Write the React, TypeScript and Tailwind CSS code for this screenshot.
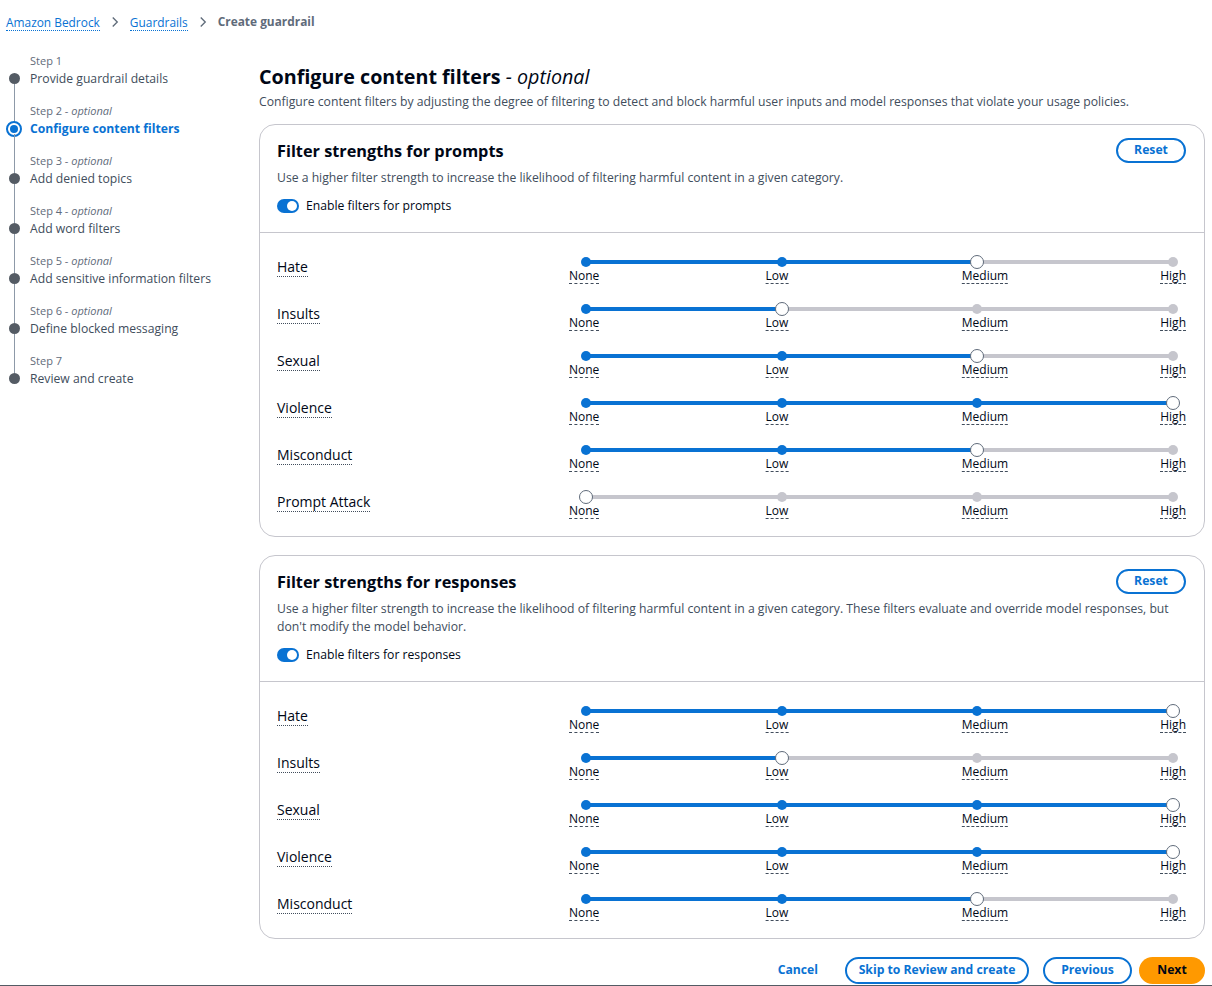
import React from 'react';

const levels = ['None', 'Low', 'Medium', 'High'];

// label placement under the ticks (px from the slider's left edge)
const labelPos = [
  'left-0',
  'left-[208px] -translate-x-1/2',
  'left-[416px] -translate-x-1/2',
  'right-0',
];

const steps = [
  { n: 1, optional: false, title: 'Provide guardrail details' },
  { n: 2, optional: true, title: 'Configure content filters', active: true },
  { n: 3, optional: true, title: 'Add denied topics' },
  { n: 4, optional: true, title: 'Add word filters' },
  { n: 5, optional: true, title: 'Add sensitive information filters' },
  { n: 6, optional: true, title: 'Define blocked messaging' },
  { n: 7, optional: false, title: 'Review and create' },
];

const promptFilters = [
  { name: 'Hate', value: 2 },
  { name: 'Insults', value: 1 },
  { name: 'Sexual', value: 2 },
  { name: 'Violence', value: 3 },
  { name: 'Misconduct', value: 2 },
  { name: 'Prompt Attack', value: 0 },
];

const responseFilters = [
  { name: 'Hate', value: 3 },
  { name: 'Insults', value: 1 },
  { name: 'Sexual', value: 3 },
  { name: 'Violence', value: 3 },
  { name: 'Misconduct', value: 2 },
];

const Chevron = () => (
  <svg width="12" height="12" viewBox="0 0 16 16" className="mx-[9px]">
    <path d="M5 2l6 6-6 6" fill="none" stroke="#5f6b7a" strokeWidth="1.8" />
  </svg>
);

const Sidebar = () => (
  <nav className="w-[259px] shrink-0 pt-[8px]">
    {steps.map((s, i) => (
      <div key={s.n} className="flex h-[50px]">
        <div className="w-[28px] flex flex-col items-center">
          <div className={`w-[1px] h-[21px] ${i === 0 ? '' : 'bg-[#8d99a8]'}`} />
          {s.active ? (
            <div className="w-[16px] h-[16px] -my-[2.5px] rounded-full border-2 border-[#0972d3] flex items-center justify-center">
              <div className="w-[8px] h-[8px] rounded-full bg-[#0972d3]" />
            </div>
          ) : (
            <div className="w-[11px] h-[11px] rounded-full bg-[#545b64]" />
          )}
          <div className={`w-[1px] flex-1 ${i === steps.length - 1 ? '' : 'bg-[#8d99a8]'}`} />
        </div>
        <div className="ml-[2px]">
          <div className="h-[18px] leading-[18px] text-[11px] text-[#5f6b7a]">
            Step {s.n}
            {s.optional && (
              <>
                {' - '}
                <i>optional</i>
              </>
            )}
          </div>
          <div
            className={`h-[18px] leading-[18px] text-[12.2px] ${
              s.active ? 'font-bold text-[#0972d3]' : 'text-[#414d5c]'
            }`}
          >
            {s.title}
          </div>
        </div>
      </div>
    ))}
  </nav>
);

const Slider = ({ value }: { value: number }) => {
  const pct = (value / 3) * 100;
  return (
    <div className="w-[617px] shrink-0">
      <div className="relative h-[14px] mt-[7px] ml-[17px] mr-[13px]">
        <div className="absolute inset-x-0 top-[5px] h-[4px] rounded-full bg-[#c6c6cd]" />
        <div className="absolute left-0 top-[5px] h-[4px] rounded-full bg-[#0972d3]" style={{ width: `${pct}%` }} />
        {levels.map((_, i) => (
          <div
            key={i}
            className={`absolute top-[2px] w-[10px] h-[10px] -ml-[5px] rounded-full ${
              i <= value ? 'bg-[#0972d3]' : 'bg-[#c6c6cd]'
            }`}
            style={{ left: `${(i / 3) * 100}%` }}
          />
        ))}
        <div
          className="absolute top-0 w-[14px] h-[14px] -ml-[7px] rounded-full bg-white border-[1.5px] border-[#5f6b7a]"
          style={{ left: `${pct}%` }}
        />
      </div>
      <div className="relative h-[16px]">
        {levels.map((l, i) => (
          <span
            key={l}
            className={`absolute top-0 text-[12px] leading-[14px] text-[#000716] border-b border-dashed border-[#414d5c] ${labelPos[i]}`}
          >
            {l}
          </span>
        ))}
      </div>
    </div>
  );
};

const FilterRow = ({ name, value }: { name: string; value: number }) => (
  <div className="flex h-[47px] items-start justify-between">
    <span className="mt-[10px] text-[14px] leading-[18px] text-[#000716] border-b border-dotted border-[#414d5c]">
      {name}
    </span>
    <Slider value={value} />
  </div>
);

const Toggle = () => (
  <div className="w-[22px] h-[14px] rounded-full bg-[#0972d3] flex items-center justify-end pr-[2px]">
    <div className="w-[10px] h-[10px] rounded-full bg-white" />
  </div>
);

const FilterCard = ({
  title,
  desc,
  toggle,
  rows,
}: {
  title: string;
  desc: React.ReactNode;
  toggle: string;
  rows: { name: string; value: number }[];
}) => (
  <section className="rounded-[16px] border border-[#c6c6cd] bg-white">
    <div className="pt-[13px] pl-[17px] pr-[18px] pb-[16px] border-b border-[#c6c6cd]">
      <div className="flex items-center justify-between">
        <h2 className="text-[16.3px] leading-[22px] font-bold text-[#000716]">{title}</h2>
        <button className="w-[70px] h-[25px] rounded-full border-2 border-[#0972d3] text-[12.2px] font-bold text-[#0972d3]">
          Reset
        </button>
      </div>
      <p className="mt-[6px] text-[12.2px] leading-[18px] text-[#414d5c]">{desc}</p>
      <div className="mt-[9px] h-[20px] flex items-center gap-[7px]">
        <Toggle />
        <span className="text-[12.2px] text-[#000716]">{toggle}</span>
      </div>
    </div>
    <div className="pt-[15px] pb-[6px] pl-[17px] pr-[18px]">
      {rows.map((r) => (
        <FilterRow key={r.name} name={r.name} value={r.value} />
      ))}
    </div>
  </section>
);

export default function App() {
  return (
    <div
      className="w-[1212px] h-[986px] bg-white text-[#000716] border-b border-[#545b64] overflow-hidden"
      style={{ fontFamily: '"Open Sans", "Noto Sans", Arial, sans-serif' }}
    >
      <div className="h-[44px] flex items-center pl-[6px] text-[11.9px]">
        <a className="text-[#0972d3] border-b border-dotted border-[#0972d3] leading-[16px]">Amazon Bedrock</a>
        <Chevron />
        <a className="text-[#0972d3] border-b border-dotted border-[#0972d3] leading-[16px]">Guardrails</a>
        <Chevron />
        <span className="font-bold text-[#5f6b7a]">Create guardrail</span>
      </div>
      <div className="flex">
        <Sidebar />
        <main className="w-[946px] pt-[20px]">
          <h1 className="text-[19.7px] leading-[26px] font-bold text-[#000716]">
            Configure content filters <span className="italic font-normal">- optional</span>
          </h1>
          <p className="mt-[3px] text-[12.2px] leading-[18px] text-[#414d5c]">
            Configure content filters by adjusting the degree of filtering to detect and block harmful user inputs and
            model responses that violate your usage policies.
          </p>
          <div className="mt-[13px] flex flex-col gap-[18px]">
            <FilterCard
              title="Filter strengths for prompts"
              desc="Use a higher filter strength to increase the likelihood of filtering harmful content in a given category."
              toggle="Enable filters for prompts"
              rows={promptFilters}
            />
            <FilterCard
              title="Filter strengths for responses"
              desc="Use a higher filter strength to increase the likelihood of filtering harmful content in a given category. These filters evaluate and override model responses, but don't modify the model behavior."
              toggle="Enable filters for responses"
              rows={responseFilters}
            />
          </div>
          <div className="mt-[18px] flex items-center justify-end gap-[7px] text-[12.2px] font-bold">
            <button className="h-[27px] px-[20px] text-[#0972d3]">Cancel</button>
            <button className="h-[27px] w-[184px] rounded-full border-2 border-[#0972d3] text-[#0972d3]">
              Skip to Review and create
            </button>
            <button className="h-[27px] w-[89px] ml-[7px] rounded-full border-2 border-[#0972d3] text-[#0972d3]">
              Previous
            </button>
            <button className="h-[27px] w-[66px] rounded-full bg-[#ff9900] text-[#000716]">Next</button>
          </div>
        </main>
      </div>
    </div>
  );
}
